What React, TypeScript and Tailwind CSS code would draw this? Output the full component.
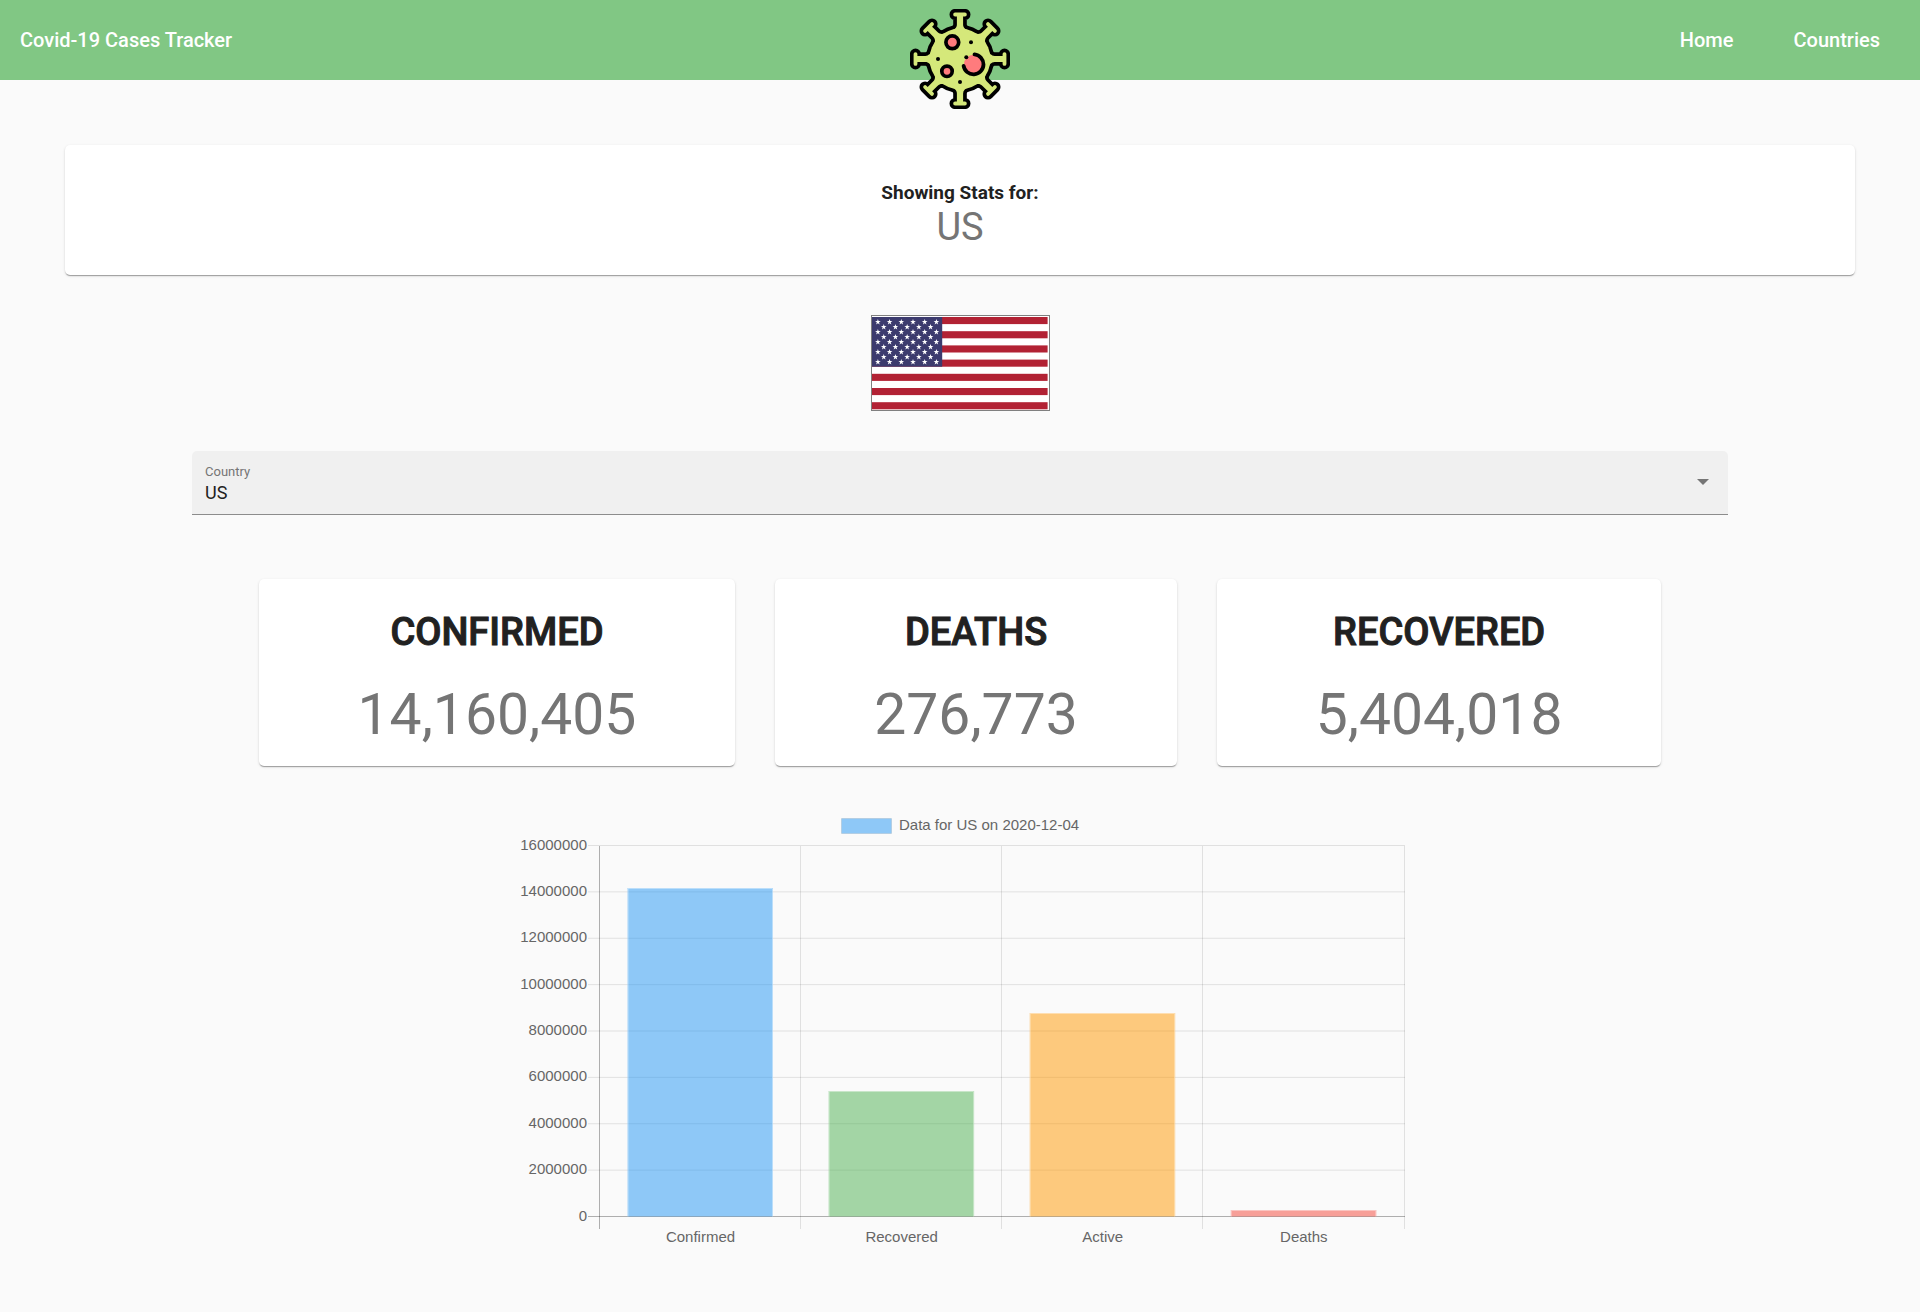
const BAR_MAX = 16000000;

const bars = [
  { label: "Confirmed", value: 14160405, color: "#2196f3" },
  { label: "Recovered", value: 5404018, color: "#4caf50" },
  { label: "Active", value: 8765000, color: "#ff9800" },
  { label: "Deaths", value: 276773, color: "#f44336" },
];

const stats = [
  { title: "CONFIRMED", value: "14,160,405" },
  { title: "DEATHS", value: "276,773" },
  { title: "RECOVERED", value: "5,404,018" },
];

const cardClass =
  "rounded-[5px] bg-white text-center shadow-[0_2px_1px_-1px_rgba(0,0,0,0.2),0_1px_1px_0_rgba(0,0,0,0.14),0_1px_3px_0_rgba(0,0,0,0.12)]";

function VirusShapes() {
  return (
    <>
      <circle cx="50" cy="50" r="30.4" />
      {[0, 45, 90, 135, 180, 225, 270, 315].map((angle) => (
        <path
          key={angle}
          transform={`rotate(${angle} 50 50)`}
          d="M45.100 3.600h9.800a1.700 1.700 0 0 1 0 3.800h-1.800v8c0 3.200 2.400 5.400 6.600 7h-19.400c4.200-1.600 6.600-3.800 6.600-7v-8h-1.800a1.700 1.700 0 0 1 0-3.800z"
        />
      ))}
    </>
  );
}

function VirusLogo() {
  return (
    <svg viewBox="0 0 100 100" className="size-25" role="img" aria-label="Virus">
      <g fill="#000" stroke="#000" strokeWidth="7.400" strokeLinejoin="round">
        <VirusShapes />
      </g>
      <g fill="#d5e87a">
        <VirusShapes />
      </g>
      <g fill="#ff7b7d" stroke="#000" strokeWidth="3.700">
        <circle cx="42.300" cy="33.300" r="6.400" />
        <circle cx="37" cy="62.300" r="5.200" />
      </g>
      <circle cx="63.600" cy="55.300" r="9.600" fill="#ff7b7d" />
      <path
        d="M64.500 45.400a10 10 0 1 1-10.900 11.400"
        fill="none"
        stroke="#000"
        strokeWidth="3.800"
        strokeLinecap="round"
      />
      <circle cx="56.300" cy="48.300" r="2" />
      <circle cx="61" cy="33.300" r="2" />
      <circle cx="28" cy="50" r="2" />
      <circle cx="50" cy="73" r="2" />
    </svg>
  );
}

function Flag() {
  const stars: [number, number][] = [];
  for (let row = 0; row < 9; row++) {
    const count = row % 2 === 0 ? 6 : 5;
    for (let i = 0; i < count; i++) {
      stars.push([5.9 + (row % 2) * 5.85 + i * 11.7, 6 + row * 5]);
    }
  }
  return (
    <svg
      viewBox="0 0 177 94"
      className="h-24 w-[179px] border border-[#808080] bg-white"
      role="img"
      aria-label="Flag of US"
    >
      {[0, 1, 2, 3, 4, 5, 6].map((i) => (
        <rect key={i} x="0" y={1 + i * 14.2} width="175.600" height="7.100" fill="#b22234" />
      ))}
      <rect x="0" y="1" width="70.200" height="49.700" fill="#3c3b6e" />
      {stars.map(([x, y]) => (
        <path
          key={`${x}-${y}`}
          transform={`translate(${x} ${y}) scale(1.2)`}
          d="M0-2.500L.56-.77H2.380L.91.290L1.470 2.020L0 .950L-1.470 2.020L-.91.290L-2.380-.77H-.56z"
          fill="#fff"
        />
      ))}
    </svg>
  );
}

function Chart() {
  const left = 85;
  const top = 39.5;
  const bottom = 410.5;
  const step = 201.1;
  const y = (value: number) => bottom - (value / BAR_MAX) * (bottom - top);
  return (
    <svg
      viewBox="0 0 890 445"
      className="w-full max-w-[890px] fill-[#666] font-['Liberation_Sans',Arial,sans-serif] text-[15px]"
      role="img"
      aria-label="Data for US on 2020-12-04"
    >
      <rect x="326.500" y="12.500" width="50" height="15" fill="#2196f3" fillOpacity="0.5" stroke="#000" strokeOpacity="0.08" />
      <text x="384" y="24">Data for US on 2020-12-04</text>

      {Array.from({ length: 9 }, (_, i) => i * 2000000).map((tick) => (
        <g key={tick}>
          <line
            x1="73"
            x2="890"
            y1={y(tick)}
            y2={y(tick)}
            stroke="#000"
            strokeOpacity={tick === 0 ? 0.3 : 0.1}
          />
          <text x="72" y={Math.round(y(tick)) + 4} textAnchor="end">
            {tick}
          </text>
        </g>
      ))}
      {[0, 1, 2, 3, 4].map((i) => {
        const x = Math.round(left + i * step) + (i === 4 ? 0.5 : -0.5);
        return (
          <line key={i} x1={x} x2={x} y1="40" y2="423" stroke="#000" strokeOpacity={i === 0 ? 0.3 : 0.1} />
        );
      })}
      {bars.map((bar, i) => {
        const x = left + i * step + 27.5;
        const barTop = Math.round(y(bar.value));
        return (
          <g key={bar.label}>
            <rect x={x} y={barTop} width="145.500" height={bottom - barTop} fill={bar.color} fillOpacity="0.5" />
            <path
              d={`M${x + 0.5} ${bottom}V${barTop + 0.5}H${x + 145}V${bottom}`}
              fill="none"
              stroke="#fff"
              strokeOpacity="0.4"
            />
            <text x={left + (i + 0.5) * step} y="436" textAnchor="middle">
              {bar.label}
            </text>
          </g>
        );
      })}
    </svg>
  );
}

export default function App() {
  return (
    <div className="min-h-screen bg-[#fafafa] font-[Roboto,sans-serif] text-[#212121]">
      <header className="relative flex h-20 items-center justify-between bg-[#81c784] px-5 text-xl font-medium text-white">
        <h1>Covid-19 Cases Tracker</h1>
        <nav className="flex gap-5">
          <a href="#home" className="px-5">
            Home
          </a>
          <a href="#countries" className="px-5">
            Countries
          </a>
        </nav>
        <div className="absolute top-[9px] left-1/2 -translate-x-1/2">
          <VirusLogo />
        </div>
      </header>

      <main className="flex flex-col items-center px-[65px] pt-[65px] pb-10">
        <section className={`${cardClass} w-full pt-9 pb-[26px]`}>
          <h2 className="text-[19px] leading-6 font-bold">Showing Stats for:</h2>
          <p className="text-[38px] leading-[44px] text-[#757575]">US</p>
        </section>

        <div className="mt-10">
          <Flag />
        </div>

        <div className="relative mt-10 w-full rounded-t-[5px] border-b border-[#8c8c8c] bg-[#f0f0f0] lg:w-[80vw]">
          <label htmlFor="country" className="absolute top-[13px] left-[13px] text-[13px] leading-4 text-[#757575]">
            Country
          </label>
          <select
            id="country"
            defaultValue="US"
            className="block h-[63px] w-full appearance-none bg-transparent pt-[21px] pr-12 pl-[13px] text-lg"
          >
            <option>US</option>
          </select>
          <svg
            viewBox="0 0 12 6"
            className="pointer-events-none absolute top-7 right-[19px] h-[6px] w-3"
            aria-hidden="true"
          >
            <path d="M0 0h12L6 6z" fill="#757575" />
          </svg>
        </div>

        <section className="mt-16 flex flex-wrap justify-center gap-10">
          {stats.map((stat) => (
            <article key={stat.title} className={`${cardClass} px-[99px] pt-7 pb-[13px]`}>
              <h2 className="text-[38px] leading-[50px] font-medium [-webkit-text-stroke:1px_#212121]">
                {stat.title}
              </h2>
              <p className="mt-5 text-[57px] leading-[76px] text-[#757575]">{stat.value}</p>
            </article>
          ))}
        </section>

        <section className="mt-10 flex w-full justify-center">
          <Chart />
        </section>
      </main>
    </div>
  );
}
